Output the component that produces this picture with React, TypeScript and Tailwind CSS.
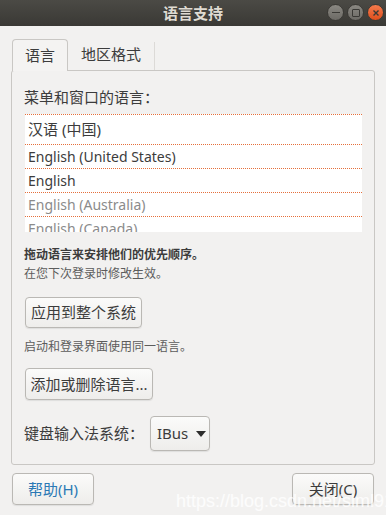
import React from "react";

const FONT = '"Noto Sans", "Noto Sans CJK SC", sans-serif';

function Btn({ children, className = "" }: { children: React.ReactNode; className?: string }) {
  return (
    <button
      className={
        "flex items-center justify-center rounded-[4px] border border-[#bab8b4] bg-gradient-to-b from-[#fbfbfa] to-[#eeedeb] text-[15px] text-[#3c3c3c] shadow-[0_1px_1px_rgba(0,0,0,0.08)] " +
        className
      }
    >
      {children}
    </button>
  );
}

export default function App() {
  const rows = [
    { t: "汉语 (中国)", h: "h-[30px] text-[15px]", c: "text-[#3c3c3c]" },
    { t: "English (United States)", h: "h-[24px] text-[14px]", c: "text-[#3c3c3c]" },
    { t: "English", h: "h-[24px] text-[14px]", c: "text-[#3c3c3c]" },
    { t: "English (Australia)", h: "h-[24px] text-[14px]", c: "text-[#8b8b8b]" },
    { t: "English (Canada)", h: "h-[24px] text-[14px]", c: "text-[#8b8b8b]" },
  ];
  return (
    <div className="relative flex h-[515px] w-[386px] flex-col overflow-hidden bg-[#f2f1f0]" style={{ fontFamily: FONT }}>
      {/* title bar */}
      <div className="relative flex h-[26px] shrink-0 items-center justify-center bg-gradient-to-b from-[#4b4a45] to-[#3a3935]">
        <span className="text-[15px] font-bold text-[#dfdbd2]">语言支持</span>
        <div className="absolute right-[2px] top-[4px] flex items-center gap-[3px]">
          <div className="flex h-[17px] w-[17px] items-center justify-center rounded-full border border-[#3a3935] bg-gradient-to-b from-[#8a8882] to-[#6c6a65]">
            <div className="h-[1.5px] w-[8px] bg-[#3a3935]" />
          </div>
          <div className="flex h-[17px] w-[17px] items-center justify-center rounded-full border border-[#3a3935] bg-gradient-to-b from-[#8a8882] to-[#6c6a65]">
            <div className="h-[8px] w-[8px] rounded-[1px] border-[1.5px] border-[#3a3935]" />
          </div>
          <div className="flex h-[17px] w-[17px] items-center justify-center rounded-full border border-[#3a3935] bg-gradient-to-b from-[#f47a4b] to-[#df4e1a]">
            <svg width="8" height="8" viewBox="0 0 8 8">
              <path d="M1.5 1.5 L6.5 6.5 M6.5 1.5 L1.5 6.5" stroke="#3a3935" strokeWidth="1.4" />
            </svg>
          </div>
        </div>
      </div>

      {/* tabs + panel */}
      <div className="flex flex-col px-[11px] pt-[13px]">
        <div className="flex h-[31px] items-stretch">
          <div className="relative z-10 -mb-px ml-px flex w-[56px] items-center justify-center rounded-t-[4px] border border-b-0 border-[#c9c7c4] bg-[#f4f3f2] text-[15px] text-[#3c3c3c]">
            语言
          </div>
          <div className="mt-[3px] flex w-[87px] items-center justify-center border-r border-[#dcdad7] pb-[3px] text-[15px] text-[#3c3c3c]">
            地区格式
          </div>
        </div>
        <div className="flex h-[395px] flex-col rounded-[3px] border border-[#c9c7c4] bg-[#f2f1f0] px-[12px] pt-[16px]">
          <div className="h-[20px] text-[15px] leading-[20px] text-[#3c3c3c]">菜单和窗口的语言：</div>
          <div className="ml-px mt-[7px] h-[118px] overflow-hidden bg-white">
            {rows.map((r) => (
              <div
                key={r.t}
                className={`${r.h} flex shrink-0 items-center border-t border-dotted border-[#e5703b] pl-[3px] ${r.c}`}
              >
                {r.t}
              </div>
            ))}
          </div>
          <div className="mt-[14px] h-[18px] text-[12px] font-bold leading-[18px] text-[#3c3c3c]">拖动语言来安排他们的优先顺序。</div>
          <div className="mt-px h-[18px] text-[12px] leading-[18px] text-[#5c5c5c]">在您下次登录时修改生效。</div>
          <Btn className="ml-px mt-[14px] h-[31px] w-[117px]">应用到整个系统</Btn>
          <div className="mt-[10px] h-[18px] text-[12px] leading-[18px] text-[#5c5c5c]">启动和登录界面使用同一语言。</div>
          <Btn className="ml-px mt-[12px] h-[32px] w-[128px]">添加或删除语言...</Btn>
          <div className="mt-[16px] flex items-center">
            <span className="w-[126px] text-[15px] text-[#3c3c3c]">键盘输入法系统：</span>
            <Btn className="h-[35px] w-[60px] justify-start gap-[8px] pl-[6px]">
              <span>IBus</span>
              <svg width="10" height="6" viewBox="0 0 10 6">
                <path d="M0 0 H10 L5 6 Z" fill="#2d2d2d" />
              </svg>
            </Btn>
          </div>
        </div>
      </div>

      {/* footer */}
      <div className="mt-[8px] flex justify-between px-[12px]">
        <Btn className="h-[32px] w-[82px] !text-[#2b79b5]">帮助(H)</Btn>
        <Btn className="h-[32px] w-[82px]">关闭(C)</Btn>
      </div>
      <div className="pointer-events-none absolute left-[176px] top-[488px] text-[18px] text-white/80" style={{ fontFamily: '"Liberation Sans", sans-serif' }}>
        https://blog.csdn.net/slml916
      </div>
    </div>
  );
}
